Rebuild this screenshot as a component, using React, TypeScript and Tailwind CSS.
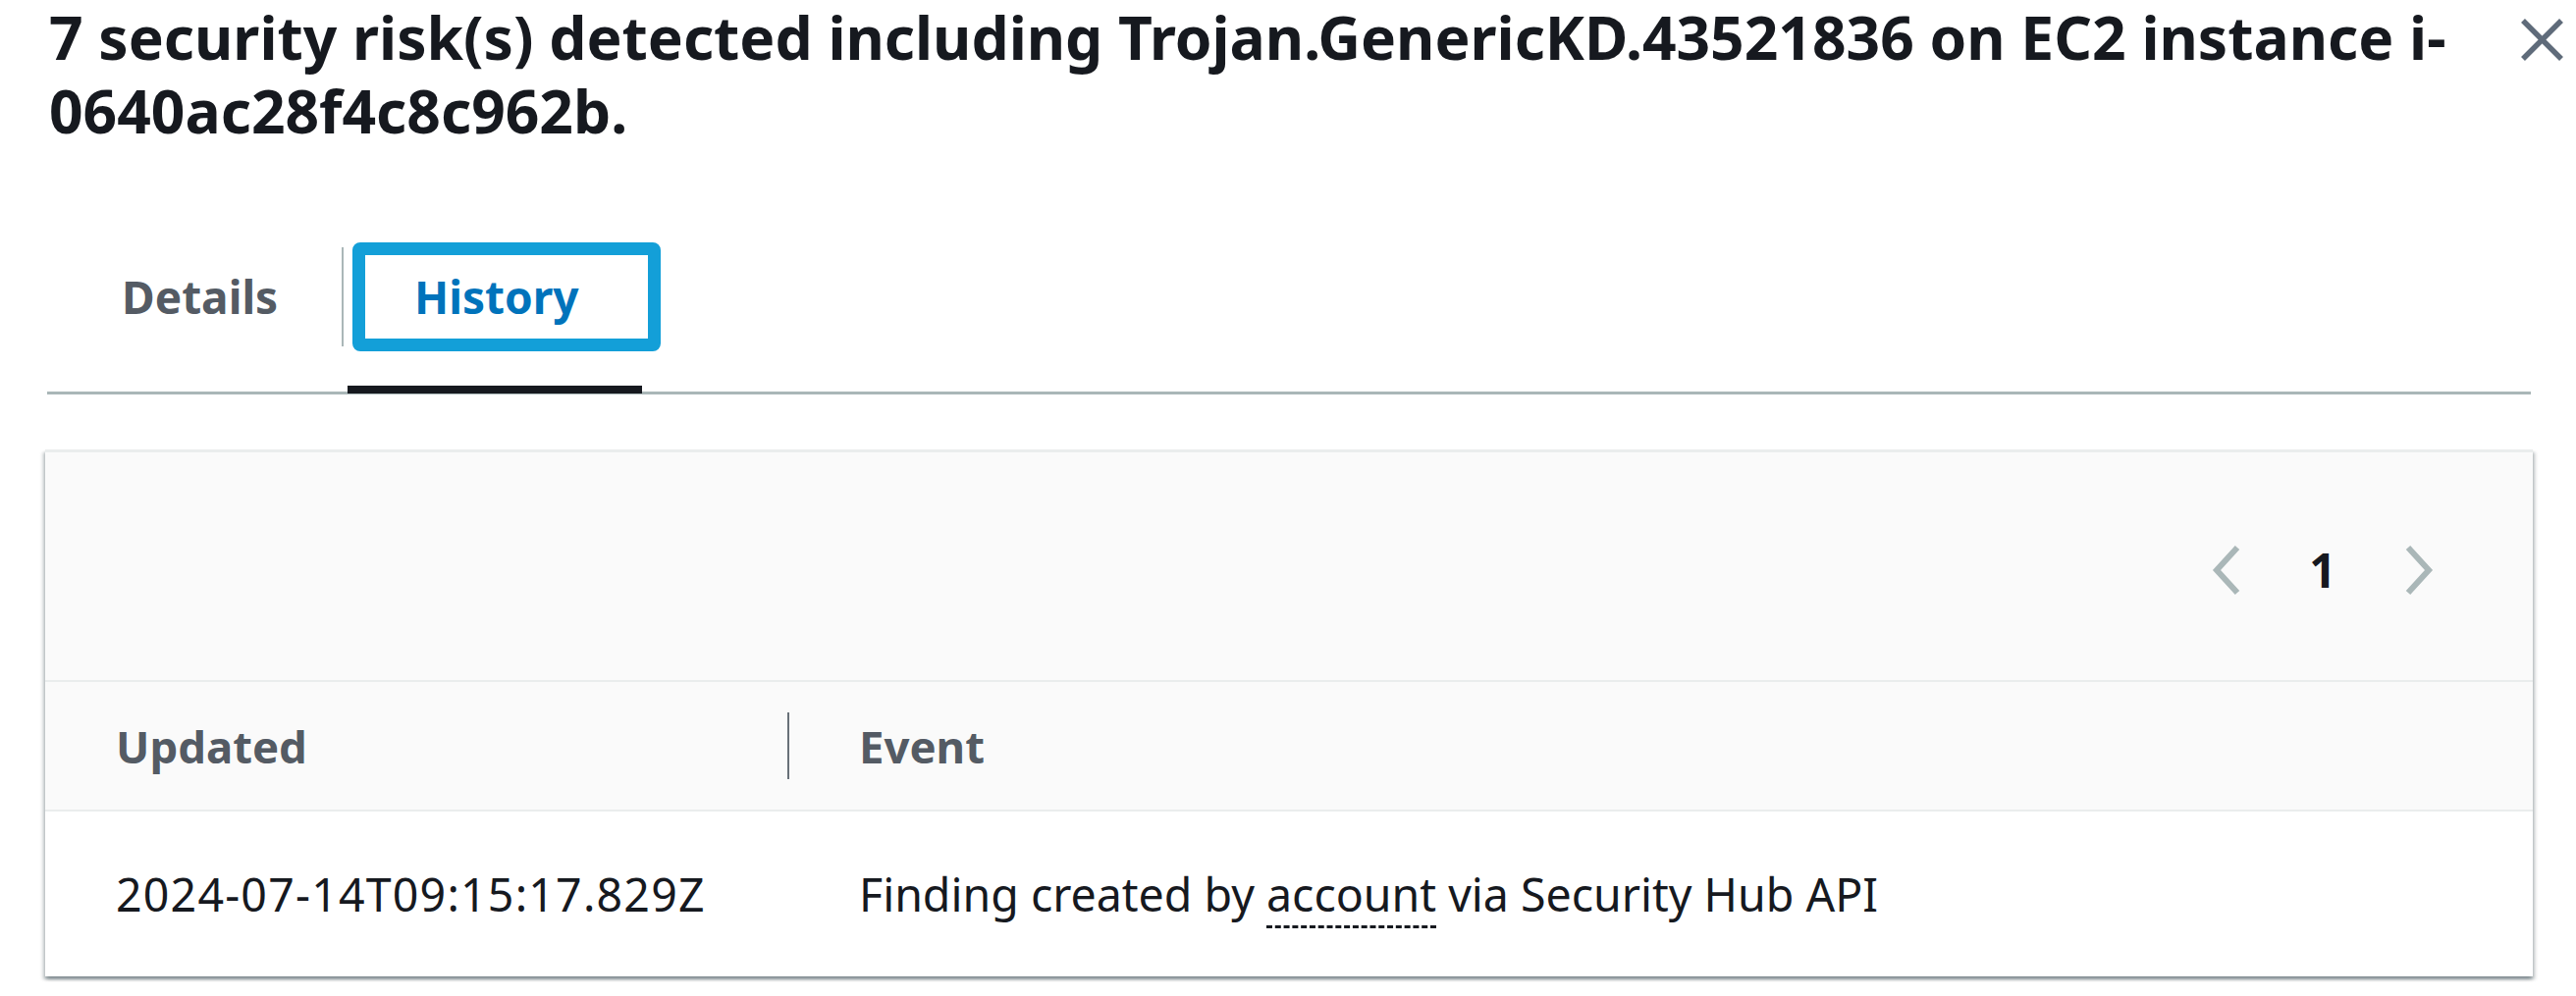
import React from 'react'

function CloseIcon() {
    return (
        <svg viewBox="0 0 45 45" className="h-[45px] w-[45px]" fill="none" stroke="currentColor" strokeWidth={5.5}>
            <line x1="3" y1="3" x2="42" y2="42" />
            <line x1="42" y1="3" x2="3" y2="42" />
        </svg>
    )
}

function Chevron({ dir }: { dir: 'left' | 'right' }) {
    const points = dir === 'left' ? '27,3 6,26 27,49' : '5,3 26,26 5,49'
    return (
        <svg viewBox="0 0 32 52" className="h-[52px] w-[32px]" fill="none" stroke="#aab7b8" strokeWidth={6}>
            <polyline points={points} />
        </svg>
    )
}

function Tabs() {
    return (
        <div className="ml-[48px] mr-[46px] mt-[97px] flex border-b-[3px] border-[#aab7b8]">
            <div className="h-[152px] w-[300px] pl-[76px] pt-[25px] text-[46px] font-bold leading-[60px] text-[#545b64]">
                Details
            </div>
            <div className="mt-[5px] h-[101px] w-[2px] bg-[#aab7b8]" />
            <div className="relative flex h-[152px] w-[320px] flex-col">
                <span className="pl-[72px] pt-[25px] text-[46px] font-bold leading-[60px] text-[#0073bb]">History</span>
                <span className="-mb-[2px] ml-[4px] mt-auto h-[8px] w-[300px] bg-[#16191f]" />
                {/* focus ring */}
                <span className="pointer-events-none absolute left-[9px] top-0 h-[111px] w-[314px] rounded-[8px] border-[13px] border-[#139fd8]" />
            </div>
        </div>
    )
}

function HistoryTable() {
    return (
        <div className="ml-[46px] mr-[44px] mt-[56px] border-t-[3px] border-[#eaeded] bg-white shadow-[0_3px_3px_0_rgba(0,28,36,0.3),3px_3px_3px_0_rgba(0,28,36,0.15),-3px_3px_3px_0_rgba(0,28,36,0.15)]">
            {/* Pagination */}
            <div className="flex h-[232px] items-center justify-end gap-[50px] bg-[#fafafa] pr-[100px] pt-[8px]">
                <Chevron dir="left" />
                <span className="w-[64px] text-center text-[48px] font-bold leading-[60px] text-[#16191f]">1</span>
                <Chevron dir="right" />
            </div>

            {/* Header */}
            <div className="flex h-[134px] items-center border-y-[2px] border-[#eaeded] bg-[#fafafa] text-[45.5px] font-bold leading-[67px] text-[#545b64]">
                <div className="flex w-[758px] items-center justify-between pl-[72px]">
                    <span>Updated</span>
                    <span className="h-[68px] w-[2px] bg-[#687078]" />
                </div>
                <div className="pl-[71px]">Event</div>
            </div>

            {/* Row */}
            <div className="flex h-[168px] items-center text-[46.5px] leading-[67px] text-[#16191f]">
                <div className="w-[758px] pl-[72px] tracking-[1.2px]">2024-07-14T09:15:17.829Z</div>
                <div className="pl-[71px]">
                    Finding created by{' '}
                    <span className="border-b-[3px] border-dashed border-[#16191f]">account</span>
                    {' '}via Security Hub API
                </div>
            </div>
        </div>
    )
}

export default function App() {
    return (
        <div className="min-h-screen bg-white font-['Noto_Sans',sans-serif] text-[#16191f]">
            <div className="flex items-start justify-between pl-[50px] pr-[12px]">
                <h2 className="max-w-[2490px] text-[60.5px] font-bold leading-[75px]">
                    7 security risk(s) detected including Trojan.GenericKD.43521836 on EC2 instance i-<wbr />0640ac28f4c8c962b.
                </h2>
                <button aria-label="Close" className="mt-[18px] h-[45px] w-[45px] text-[#5f6b7a]">
                    <CloseIcon />
                </button>
            </div>
            <Tabs />
            <HistoryTable />
        </div>
    )
}
